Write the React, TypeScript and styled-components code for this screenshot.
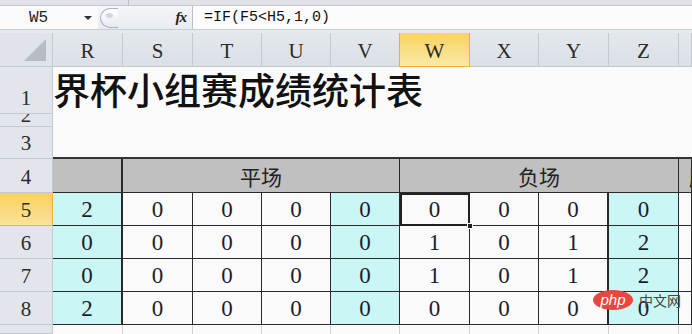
import React from "react";
import styled, { createGlobalStyle } from "styled-components";

const Global = createGlobalStyle`
  html, body { margin: 0; padding: 0; background: #f4f6f9; overflow: hidden; }
  * { box-sizing: border-box; }
`;

const Page = styled.div`
  width: 692px;
  height: 334px;
  display: flex;
  flex-direction: column;
  overflow: hidden;
  background: #f8f8f8;
`;

const TopStrip = styled.div`
  height: 6px;
  display: flex;
  background: #dfe3e9;
  border-bottom: 1px solid #c3c9d1;
`;

const TopSeg = styled.div<{ $w: number }>`
  width: ${(p) => p.$w}px;
  border-right: 1px solid #b8bfc8;
`;

const FormulaBar = styled.div`
  height: 24px;
  display: flex;
  align-items: stretch;
  background: #eef1f5;
  border-bottom: 1px solid #c9ced6;
`;

const NameBox = styled.div`
  width: 98px;
  display: flex;
  align-items: center;
  background: #fbfbfb;
  font-family: "Liberation Mono", monospace;
  font-size: 16px;
  color: #222;
  padding-left: 29px;
`;

const NameText = styled.span`
  flex: 1;
`;

const Arrow = styled.span`
  width: 0;
  height: 0;
  border-left: 4px solid transparent;
  border-right: 4px solid transparent;
  border-top: 4px solid #333;
  margin-right: 6px;
`;

const Middle = styled.div`
  width: 95px;
  display: flex;
  align-items: center;
  justify-content: space-between;
  padding-right: 6px;
  background: linear-gradient(#f4f6f9, #e8ebf0);
  border-right: 1px solid #b9c0c9;
`;

const Pill = styled.div`
  width: 18px;
  height: 20px;
  border: 1px solid #a9b1bb;
  border-right: none;
  border-radius: 10px 0 0 10px;
  background: linear-gradient(#ffffff, #e6e9ee);
  margin-left: 2px;
`;

const PillDot = styled.div`
  width: 7px;
  height: 5px;
  border-radius: 50%;
  background: #d4d8de;
  margin: 4px 0 0 5px;
`;

const Fx = styled.span`
  font-family: "Liberation Serif", serif;
  font-style: italic;
  font-weight: bold;
  font-size: 15px;
  color: #222;
  letter-spacing: -1px;
`;

const FormulaText = styled.div`
  flex: 1;
  display: flex;
  align-items: center;
  padding-left: 11px;
  background: #fcfcfc;
  font-family: "Liberation Mono", monospace;
  font-size: 15px;
  color: #111;
`;

const Spacer = styled.div`
  height: 3px;
  background: #e6e9ee;
`;

const Sheet = styled.div`
  flex: 1;
  display: grid;
  grid-template-columns: 53px 70px 70px 69px 69px 69px 70px 69px 70px 70px 1fr;
  grid-template-rows: 34px 47px 13px 32px 34px 33px 33px 33px 33px 1fr;
  position: relative;
  font-family: "Liberation Serif", serif;
`;

const Corner = styled.div`
  background: #e0e4ea;
  border-right: 1px solid #c3c9d1;
  border-bottom: 1px solid #c3c9d1;
  display: flex;
  align-items: flex-end;
  justify-content: flex-end;
  padding: 0 6px 5px 0;
`;

const Tri = styled.div`
  width: 0;
  height: 0;
  border-left: 22px solid transparent;
  border-bottom: 22px solid #b7bcc3;
`;

const ColHead = styled.div<{ $sel?: boolean }>`
  display: flex;
  align-items: center;
  justify-content: center;
  font-size: 21px;
  padding-top: 4px;
  color: #2b2b2b;
  background: ${(p) =>
    p.$sel ? "linear-gradient(#f8d35f, #fae9a6)" : "linear-gradient(#e4e8ed, #dbe0e6)"};
  border-right: 1px solid ${(p) => (p.$sel ? "#e2b43c" : "#c3c9d1")};
  border-bottom: 1px solid ${(p) => (p.$sel ? "#e2b43c" : "#c3c9d1")};
  ${(p) => (p.$sel ? "border-left: 1px solid #e2b43c; margin-left: -1px;" : "")}
`;

const RowHead = styled.div<{ $sel?: boolean; $clip?: boolean }>`
  display: flex;
  align-items: flex-end;
  justify-content: center;
  overflow: hidden;
  font-size: 21px;
  line-height: 24px;
  padding-bottom: ${(p) => (p.$clip ? "0" : "3px")};
  color: #2b2b2b;
  background: ${(p) => (p.$sel ? "linear-gradient(#f8d35f, #fae39a)" : "#e2e6ec")};
  border-right: 1px solid ${(p) => (p.$sel ? "#e2b43c" : "#c3c9d1")};
  border-bottom: 1px solid ${(p) => (p.$sel ? "#e2b43c" : "#c3c9d1")};
`;

const ClipNum = styled.span`
  display: block;
  flex-shrink: 0;
  margin-bottom: -1px;
`;

const TitleCell = styled.div`
  grid-column: 2 / -1;
  display: flex;
  align-items: flex-end;
  background: #fafafa;
  overflow: visible;
  white-space: nowrap;
  font-family: "Noto Sans CJK SC", sans-serif;
  font-size: 37px;
  font-weight: 500;
  line-height: 40px;
  color: #111;
  padding-left: 0;
  padding-bottom: 5px;
`;

const Blank = styled.div<{ $line?: boolean }>`
  grid-column: 2 / -1;
  background: #fafafa;
  border-bottom: ${(p) => (p.$line ? "2px solid #333" : "none")};
`;

const HeadCell = styled.div<{ $span?: number; $thick?: boolean; $left?: boolean }>`
  grid-column: span ${(p) => p.$span || 1};
  display: flex;
  align-items: center;
  justify-content: ${(p) => (p.$left ? "flex-start" : "center")};
  padding-left: ${(p) => (p.$left ? "10px" : "0")};
  overflow: hidden;
  white-space: nowrap;
  background: #c0c0c0;
  font-family: "Noto Sans CJK SC", sans-serif;
  font-size: 21px;
  color: #222;
  border-right: ${(p) => (p.$thick ? "2px" : "1px")} solid #2a2a2a;
  border-bottom: 1px solid #2a2a2a;
`;

const Cell = styled.div<{ $cyan?: boolean; $thick?: boolean }>`
  display: flex;
  align-items: center;
  justify-content: center;
  font-size: 23px;
  padding-top: 2px;
  color: #1d1d2a;
  background: ${(p) => (p.$cyan ? "#cbf6f6" : "#fafafa")};
  border-right: ${(p) => (p.$thick ? "2px" : "1px")} solid #2a2a2a;
  border-bottom: 1px solid #2a2a2a;
`;

const SelCell = styled(Cell)`
  position: relative;
  outline: 2px solid #222;
  outline-offset: -2px;
`;

const Handle = styled.div`
  position: absolute;
  right: -4px;
  bottom: -4px;
  width: 6px;
  height: 6px;
  background: #222;
  border: 1px solid #fff;
  z-index: 2;
`;

const EmptyCell = styled.div`
  background: #fafafa;
  border-right: 1px solid #d0d4d9;
`;

const Watermark = styled.div`
  position: absolute;
  left: 593px;
  top: 257px;
  display: flex;
  align-items: center;
  gap: 6px;
  z-index: 3;
`;

const PhpBadge = styled.div`
  width: 40px;
  height: 20px;
  border-radius: 50%;
  background: #e8463e;
  color: #fff;
  font-family: "Liberation Sans", sans-serif;
  font-style: italic;
  font-size: 15px;
  display: flex;
  align-items: center;
  justify-content: center;
  padding-bottom: 2px;
`;

const WmText = styled.span`
  font-family: "Noto Sans CJK SC", sans-serif;
  font-size: 14px;
  color: #444;
`;

const cols = ["R", "S", "T", "U", "V", "W", "X", "Y", "Z"];
const data = [
  [2, 0, 0, 0, 0, 0, 0, 0, 0],
  [0, 0, 0, 0, 0, 1, 0, 1, 2],
  [0, 0, 0, 0, 0, 1, 0, 1, 2],
  [2, 0, 0, 0, 0, 0, 0, 0, 0],
];
const cyanCols = new Set([0, 4, 8]);
const thickCols = new Set([0, 7]);

export default function App() {
  return (
    <Page>
      <Global />
      <TopStrip>
        <TopSeg $w={129} />
      </TopStrip>
      <FormulaBar>
        <NameBox>
          <NameText>W5</NameText>
          <Arrow />
        </NameBox>
        <Middle>
          <Pill>
            <PillDot />
          </Pill>
          <Fx>fx</Fx>
        </Middle>
        <FormulaText>=IF(F5&lt;H5,1,0)</FormulaText>
      </FormulaBar>
      <Spacer />
      <Sheet>
        <Corner>
          <Tri />
        </Corner>
        {cols.map((c) => (
          <ColHead key={c} $sel={c === "W"}>
            {c}
          </ColHead>
        ))}
        <ColHead />

        <RowHead>1</RowHead>
        <TitleCell>界杯小组赛成绩统计表</TitleCell>

        <RowHead $clip>
          <ClipNum>2</ClipNum>
        </RowHead>
        <Blank />

        <RowHead>3</RowHead>
        <Blank $line />

        <RowHead>4</RowHead>
        <HeadCell $thick />
        <HeadCell $span={4}>平场</HeadCell>
        <HeadCell $span={4}>负场</HeadCell>
        <HeadCell $left>胜场</HeadCell>

        {data.map((row, r) => (
          <React.Fragment key={r}>
            <RowHead $sel={r === 0}>{r + 5}</RowHead>
            {row.map((v, c) =>
              r === 0 && c === 5 ? (
                <SelCell key={c} $cyan={cyanCols.has(c)} $thick={thickCols.has(c)}>
                  {v}
                  <Handle />
                </SelCell>
              ) : (
                <Cell key={c} $cyan={cyanCols.has(c)} $thick={thickCols.has(c)}>
                  {v}
                </Cell>
              )
            )}
            <Cell />
          </React.Fragment>
        ))}

        <RowHead />
        {cols.map((c) => (
          <EmptyCell key={c} />
        ))}
        <EmptyCell />

        <Watermark>
          <PhpBadge>php</PhpBadge>
          <WmText>中文网</WmText>
        </Watermark>
      </Sheet>
    </Page>
  );
}
